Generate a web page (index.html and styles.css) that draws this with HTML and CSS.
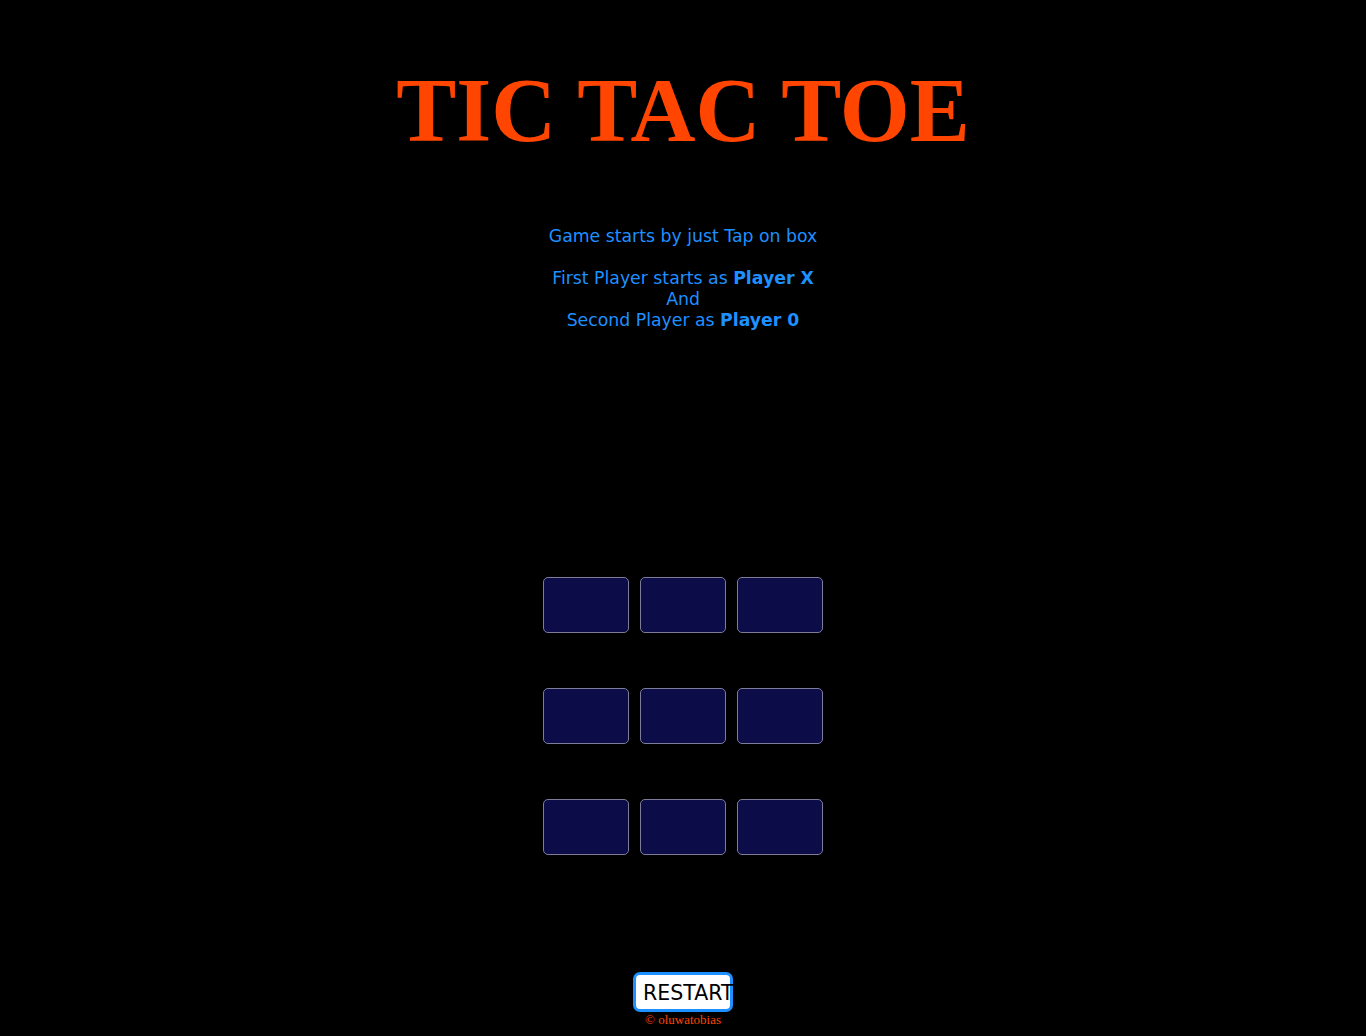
FILE: index.html
```html
<!DOCTYPE html>
<html>
<head>
<meta charset="utf-8">
<link rel="stylesheet" href="styles.css">
</head>
<body>
<h1 class="title">TIC TAC TOE</h1>
<div class="info">
  <p>Game starts by just Tap on box</p>
  <p>First Player starts as <b>Player X</b><br>And<br>Second Player as <b>Player 0</b></p>
</div>
<div class="board">
  <div class="row"><div class="cell"></div><div class="cell"></div><div class="cell"></div></div>
  <div class="row"><div class="cell"></div><div class="cell"></div><div class="cell"></div></div>
  <div class="row"><div class="cell"></div><div class="cell"></div><div class="cell"></div></div>
</div>
<div class="footer">
  <button class="restart">RESTART</button>
  <div class="credit">© oluwatobias</div>
</div>
</body>
</html>
```
FILE: styles.css
```css
html, body {
  margin: 0;
  padding: 0;
  background: #000;
}
body {
  display: flex;
  flex-direction: column;
  align-items: center;
  min-height: 1036px;
}
.title {
  font-family: "Liberation Serif", serif;
  font-weight: bold;
  font-size: 90px;
  color: #ff4500;
  margin: 61px 0 0 0;
  line-height: 100px;
}
.info {
  font-family: "DejaVu Sans", sans-serif;
  font-size: 17.3px;
  line-height: 21px;
  color: #1e90ff;
  text-align: center;
  margin-top: 65px;
}
.info p {
  margin: 0 0 21px 0;
}
.board {
  display: flex;
  flex-direction: column;
  gap: 55px;
  margin-top: 225px;
}
.row {
  display: flex;
  gap: 11px;
}
.cell {
  width: 84px;
  height: 54px;
  background: #0c0c48;
  border: 1px solid #7d7d9a;
  border-radius: 5px;
}
.footer {
  display: flex;
  flex-direction: column;
  align-items: center;
  margin-top: 117px;
}
.restart {
  font-family: "DejaVu Sans", sans-serif;
  font-size: 20.5px;
  background: #fff;
  color: #000;
  border: 3px solid #1e90ff;
  border-radius: 7px;
  width: 100px;
  height: 40px;
  padding: 2px 0 0 7px;
  text-align: left;
  white-space: nowrap;
  overflow: visible;
}
.credit {
  font-family: "Liberation Serif", serif;
  font-size: 13px;
  color: #ff4500;
  line-height: 14px;
  margin-top: 1px;
}
```
